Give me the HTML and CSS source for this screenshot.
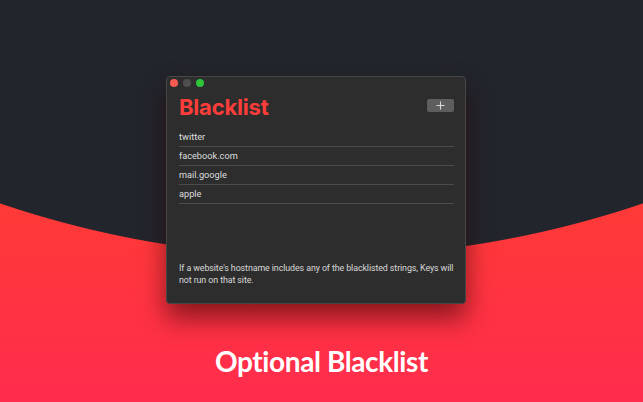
FILE: index.html
```html
<!DOCTYPE html>
<html lang="en">
<head>
    <meta charset="UTF-8">
    <meta name="viewport" content="width=device-width, initial-scale=1.0">
    <title>Optional Blacklist</title>
    <link rel="stylesheet" href="styles.css">
</head>
<body>

    <!-- App window -->
    <div class="window">
        <div class="titlebar">
            <span class="dot dot-close"></span>
            <span class="dot dot-min"></span>
            <span class="dot dot-zoom"></span>
        </div>

        <div class="content">
            <div class="head">
                <h1>Blacklist</h1>
                <button class="add-btn">
                    <svg width="9" height="9" viewBox="0 0 9 9">
                        <path d="M4.5 0.5v8M0.5 4.5h8" stroke="#d8d8d8" stroke-width="1.1"/>
                    </svg>
                </button>
            </div>

            <ul class="list">
                <li>twitter</li>
                <li>facebook.com</li>
                <li>mail.google</li>
                <li>apple</li>
            </ul>

            <p class="note">If a website's hostname includes any of the blacklisted strings, Keys will not run on that site.</p>
        </div>
    </div>

    <h2 class="caption">Optional Blacklist</h2>

</body>
</html>
```

FILE: styles.css
```css
/* Page */
body {
    margin: 0;
    padding: 0;
    height: 402px;
    overflow: hidden;
    font-family: Roboto, "Noto Sans", sans-serif;
    background:
        radial-gradient(circle 1000px at 50% -743px, #22252c 999px, transparent 1000px),
        linear-gradient(180deg, #ff3a36 200px, #ff2c4d 402px);
}

/* Window */
.window {
    width: 298px;
    height: 226px;
    margin: 76px 0 0 166px;
    background-color: #2d2d2d;
    border: 1px solid #474747;
    border-radius: 4px;
    box-shadow: 0 14px 26px rgba(40, 0, 0, 0.55);
}

.titlebar {
    display: flex;
    gap: 5px;
    padding: 2px 3px 0;
}

.dot {
    width: 8px;
    height: 8px;
    border-radius: 50%;
}

.dot-close { background-color: #fc5b54; }
.dot-min { background-color: #4e4e4e; }
.dot-zoom { background-color: #2ec43c; }

.content {
    padding: 0 8px 0 12px;
}

.head {
    display: flex;
    justify-content: space-between;
    align-items: flex-start;
    margin-top: 7px;
    padding-right: 3px;
}

.head h1 {
    margin: 0;
    font-family: Inter, sans-serif;
    font-size: 22px;
    line-height: 26px;
    font-weight: 700;
    color: #fc3d39;
    letter-spacing: -0.2px;
}

.add-btn {
    display: flex;
    align-items: center;
    justify-content: center;
    width: 27px;
    height: 13px;
    margin-top: 5px;
    padding: 0;
    border: none;
    border-radius: 2px;
    background-color: #5e5e5e;
}

/* Items */
.list {
    list-style: none;
    margin: 8px 3px 0 0;
    padding: 0;
}

.list li {
    height: 18px;
    line-height: 17px;
    font-size: 9.2px;
    color: #dedede;
    border-bottom: 1px solid #4b4b4b;
}

.note {
    margin: 59px 0 0;
    font-size: 8.9px;
    line-height: 11.5px;
    letter-spacing: -0.1px;
    color: #d8d8d8;
}

/* Caption */
.caption {
    margin: 40px 0 0;
    text-align: center;
    font-family: Lato, sans-serif;
    font-size: 28px;
    font-weight: 700;
    letter-spacing: -0.4px;
    color: #fff;
}
```
